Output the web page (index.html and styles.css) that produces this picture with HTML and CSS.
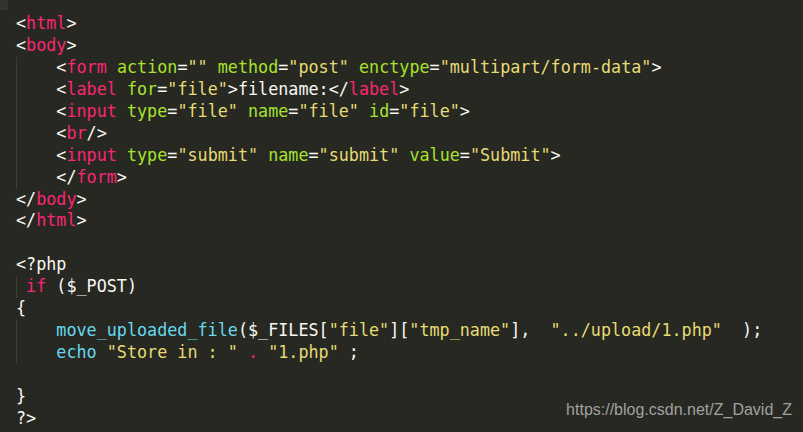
FILE: index.html
```html
<!DOCTYPE html>
<html>
<head>
<meta charset="utf-8">
<link rel="stylesheet" href="styles.css">
</head>
<body>
<div class="editor">
<div class="corner"></div>
<div class="code">
<div class="ln"><span class="p">&lt;</span><span class="t">html</span><span class="p">&gt;</span></div>
<div class="ln"><span class="p">&lt;</span><span class="t">body</span><span class="p">&gt;</span></div>
<div class="ln g">    <span class="p">&lt;</span><span class="t">form</span> <span class="a">action</span>=<span class="s">""</span> <span class="a">method</span>=<span class="s">"post"</span> <span class="a">enctype</span>=<span class="s">"multipart/form-data"</span><span class="p">&gt;</span></div>
<div class="ln g">    <span class="p">&lt;</span><span class="t">label</span> <span class="a">for</span>=<span class="s">"file"</span><span class="p">&gt;</span>filename:<span class="p">&lt;/</span><span class="t">label</span><span class="p">&gt;</span></div>
<div class="ln g">    <span class="p">&lt;</span><span class="t">input</span> <span class="a">type</span>=<span class="s">"file"</span> <span class="a">name</span>=<span class="s">"file"</span> <span class="a">id</span>=<span class="s">"file"</span><span class="p">&gt;</span></div>
<div class="ln g">    <span class="p">&lt;</span><span class="t">br</span><span class="p">/&gt;</span></div>
<div class="ln g">    <span class="p">&lt;</span><span class="t">input</span> <span class="a">type</span>=<span class="s">"submit"</span> <span class="a">name</span>=<span class="s">"submit"</span> <span class="a">value</span>=<span class="s">"Submit"</span><span class="p">&gt;</span></div>
<div class="ln g">    <span class="p">&lt;/</span><span class="t">form</span><span class="p">&gt;</span></div>
<div class="ln"><span class="p">&lt;/</span><span class="t">body</span><span class="p">&gt;</span></div>
<div class="ln"><span class="p">&lt;/</span><span class="t">html</span><span class="p">&gt;</span></div>
<div class="ln"> </div>
<div class="ln">&lt;?php</div>
<div class="ln g"> <span class="t">if</span> ($_POST)</div>
<div class="ln">{</div>
<div class="ln g">    <span class="f">move_uploaded_file</span>($_FILES[<span class="s">"file"</span>][<span class="s">"tmp_name"</span>],  <span class="s">"../upload/1.php"</span>  );</div>
<div class="ln g">    <span class="f">echo</span> <span class="s">"Store in : "</span> <span class="t">.</span> <span class="s">"1.php"</span> ;</div>
<div class="ln"> </div>
<div class="ln">}</div>
<div class="ln">?&gt;</div>
</div>
<div class="mark">https://blog.csdn.net/Z_David_Z</div>
</div>
</body>
</html>
```
FILE: styles.css
```css
html, body {
  margin: 0;
  padding: 0;
  background: #272822;
}
.editor {
  position: relative;
  width: 803px;
  height: 432px;
  overflow: hidden;
  background: #272822;
}
.corner {
  position: absolute;
  left: 0;
  top: 0;
  width: 8px;
  height: 10px;
  background: #34342f;
}
.code {
  padding: 13px 0 0 16px;
  font-family: "DejaVu Sans Mono", "Liberation Mono", monospace;
  font-size: 16.75px;
  line-height: 21.95px;
  color: #f8f8f2;
}
.ln {
  white-space: pre;
  height: 21.95px;
}
.ln.g {
  background: linear-gradient(#3e3d35, #3e3d35) no-repeat 0 0 / 1px 100%;
}
.p { color: #f8f8f2; }
.t { color: #f92672; }
.a { color: #a6e22e; }
.s { color: #e6db74; }
.f { color: #66d9ef; }
.mark {
  position: absolute;
  right: 11px;
  top: 401px;
  font-family: "Liberation Sans", Arial, sans-serif;
  font-size: 16px;
  color: #a0a0a0;
}
```
